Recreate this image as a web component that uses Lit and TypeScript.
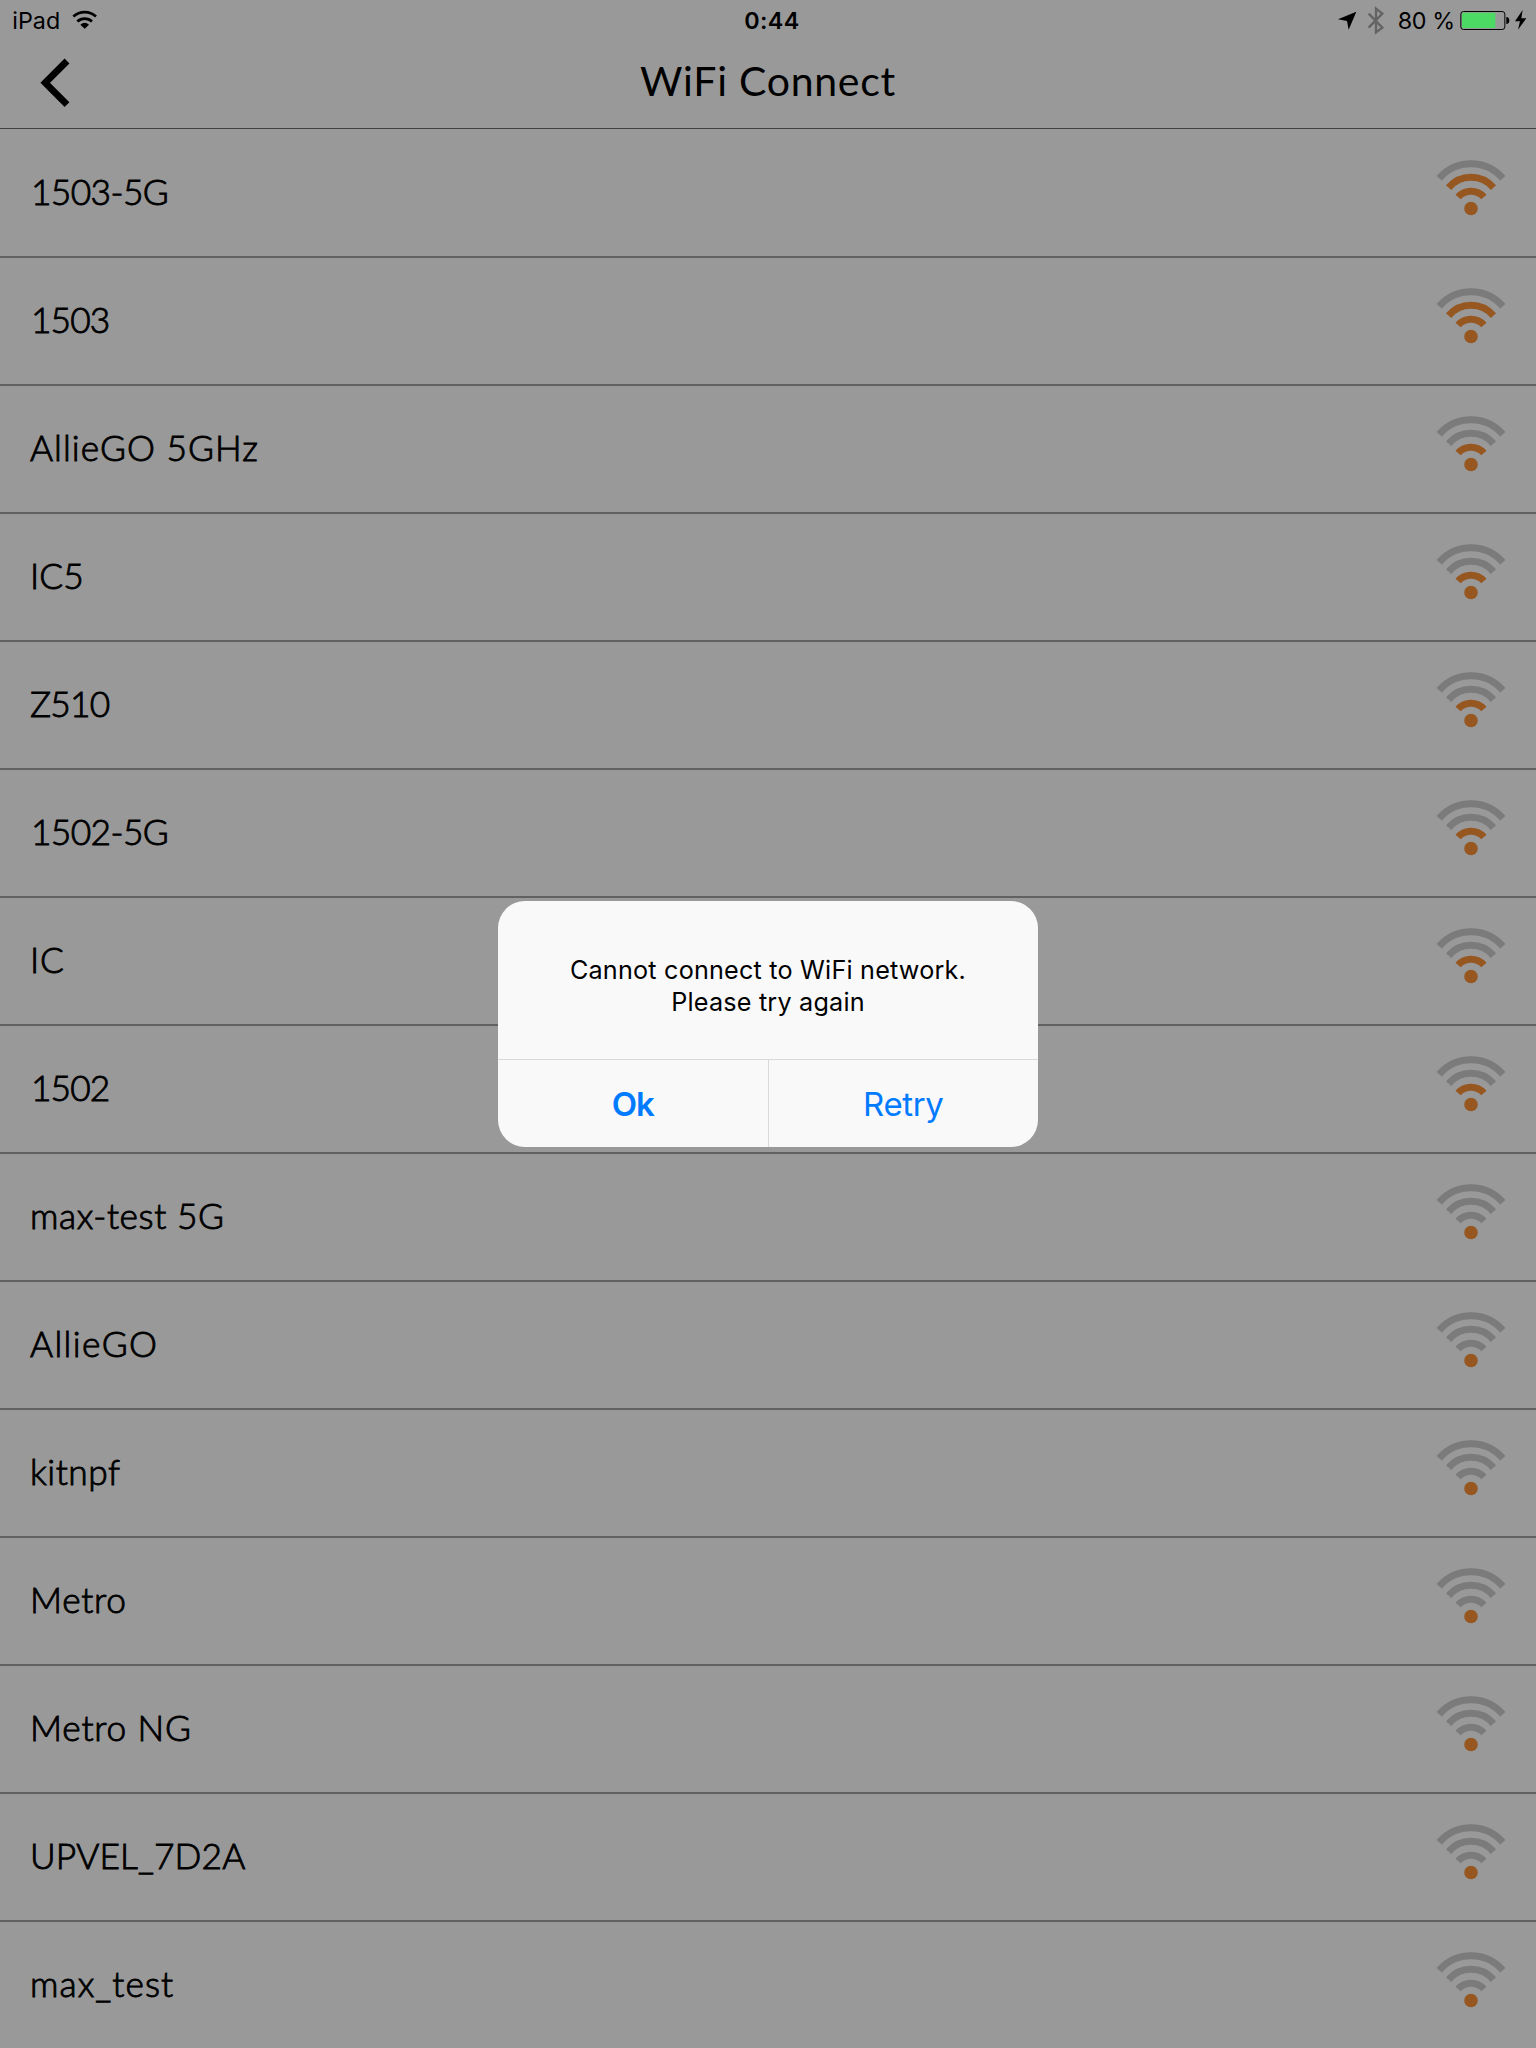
import { LitElement, html, svg, css } from "lit";
import { customElement, property } from "lit/decorators.js";
import { styleMap } from "lit/directives/style-map.js";

interface Network {
  name: string;
  level: number;
  /** Optical tracking of the label, px. */
  tracking: number;
  /** Distance of the label's origin from the left edge, px. */
  inset: number;
}

const NETWORKS: Network[] = [
  { name: "1503-5G", level: 3, tracking: -0.6, inset: 31 },
  { name: "1503", level: 3, tracking: -0.9, inset: 31 },
  { name: "AllieGO 5GHz", level: 2, tracking: 1.05, inset: 30 },
  { name: "IC5", level: 2, tracking: 0.1, inset: 30 },
  { name: "Z510", level: 2, tracking: -0.8, inset: 30 },
  { name: "1502-5G", level: 2, tracking: -0.6, inset: 31 },
  { name: "IC", level: 2, tracking: 0.8, inset: 30 },
  { name: "1502", level: 2, tracking: -0.9, inset: 31 },
  { name: "max-test 5G", level: 1, tracking: 0.6, inset: 30 },
  { name: "AllieGO", level: 1, tracking: 1.4, inset: 30 },
  { name: "kitnpf", level: 1, tracking: 0.5, inset: 30 },
  { name: "Metro", level: 1, tracking: 0.7, inset: 30 },
  { name: "Metro NG", level: 1, tracking: 0.8, inset: 30 },
  { name: "UPVEL_7D2A", level: 1, tracking: 0.12, inset: 30 },
  { name: "max_test", level: 1, tracking: 1.1, inset: 30 },
];

// Arcs from the innermost to the outermost.
const ARCS = [
  "M23.1 41A17.25 17.25 0 0 1 48.9 41",
  "M13.6 31.6A29.5 29.5 0 0 1 58.4 31.6",
  "M4.200 22.2A42 42 0 0 1 67.8 22.2",
];

@customElement("signal-icon")
export class SignalIcon extends LitElement {
  @property({ type: Number }) level = 1;

  static styles = css`
    :host { display: block; width: 72px; height: 70px; }
    svg { display: block; }
    .arc { fill: none; stroke: #7b7b7b; stroke-width: 7; }
    .arc.on { stroke: #965720; }
    .dot { fill: #965720; }
  `;

  render() {
    return html`<svg width="72" height="70" viewBox="0 0 72 70">
      ${ARCS.map((d, i) => svg`<path class=${i + 1 < this.level ? "arc on" : "arc"} d=${d} />`)}
      <circle class="dot" cx="36" cy="52.5" r="6.8" />
    </svg>`;
  }
}

@customElement("status-bar")
export class StatusBar extends LitElement {
  static styles = css`
    :host {
      display: flex;
      height: 41px;
      line-height: 41px;
      font-family: Inter, "Liberation Sans", sans-serif;
      font-size: 23.3px;
      white-space: nowrap;
    }
    svg { display: block; flex: none; }
    .left { display: flex; box-sizing: border-box; width: 744.3px; padding-left: 12.3px; }
    .device { width: 57.7px; }
    .time { font-weight: 600; letter-spacing: 0.35px; }
    .right { display: flex; margin-left: auto; }
    .percent { width: 58.97px; margin-left: 7.7px; letter-spacing: -0.4px; }
  `;

  render() {
    return html`
      <div class="left">
        <span class="device">iPad</span>
        <svg width="30" height="41" viewBox="210 0 90 123">
          <g fill="none" stroke="#000" stroke-width="8">
            <path d="M220 49.500A50 50 0 0 1 288 49.500" />
            <path d="M232 64.500A32 32 0 0 1 276 64.500" />
          </g>
          <path d="M254 86L241 74Q254 63 267 74Z" />
        </svg>
      </div>
      <span class="time">0:44</span>
      <div class="right">
        <svg width="55" height="41" viewBox="75 0 165 123">
          <path d="M139 35L116 89L111 63L84 58Z" />
          <path
            d="M176 41L217 83L198 97V26L217 41L176 83"
            fill="none" stroke="#636363" stroke-width="7"
          />
        </svg>
        <span class="percent">80 %</span>
        <svg width="79.33" height="41" viewBox="440 0 238 123">
          <rect x="451.500" y="34.500" width="132" height="54" rx="8" fill="none" stroke="#000" stroke-width="3" />
          <rect x="455" y="38" width="100" height="46" rx="3" fill="#4cd964" />
          <path d="M588 51Q597 52 597 61.500Q597 71 588 72Z" />
          <path d="M637 30L614 64H629L623 89L648 55H633Z" />
        </svg>
      </div>
    `;
  }
}

@customElement("alert-dialog")
export class AlertDialog extends LitElement {
  static styles = css`
    :host {
      display: flex;
      flex-direction: column;
      box-sizing: border-box;
      width: 540px;
      height: 246px;
      border-radius: 27px;
      background: #f9f9f9;
      overflow: hidden;
      font-family: Inter, "Liberation Sans", sans-serif;
    }
    .message {
      flex: 1;
      margin: 0;
      padding-top: 53px;
      font-size: 25.2px;
      line-height: 32px;
      letter-spacing: 0.2px;
      text-align: center;
    }
    .actions { display: flex; height: 87px; border-top: 1px solid #d9d9db; }
    button {
      flex: 1;
      margin: 0;
      padding: 1px 0 0;
      border: 0;
      background: none;
      color: #007aff;
      font: 400 33px/86px Inter, "Liberation Sans", sans-serif;
      letter-spacing: -0.4px;
    }
    .primary { font-weight: 600; letter-spacing: -1.2px; border-right: 1px solid #d9d9db; }
  `;

  render() {
    return html`
      <p class="message">Cannot connect to WiFi network.<br />Please try again</p>
      <div class="actions">
        <button class="primary">Ok</button>
        <button>Retry</button>
      </div>
    `;
  }
}

@customElement("app-root")
export class AppRoot extends LitElement {
  static styles = css`
    :host {
      display: block;
      position: relative;
      width: 1536px;
      height: 2048px;
      overflow: hidden;
      background: #999;
      color: #000;
      font-family: Lato, "Open Sans", sans-serif;
    }
    .nav {
      display: grid;
      grid-template-columns: 120px 1fr 120px;
      box-sizing: border-box;
      height: 88px;
      border-bottom: 1px solid #404040;
    }
    .back { display: block; padding: 14px 0 0 36px; }
    .title {
      margin: 0;
      font-size: 41px;
      font-weight: 400;
      line-height: 80px;
      letter-spacing: 0.72px;
      text-align: center;
    }
    .list { display: flex; flex-direction: column; margin: 0; padding: 1px 0 0; list-style: none; }
    .row {
      display: flex;
      align-items: center;
      justify-content: space-between;
      box-sizing: border-box;
      height: 128px;
      padding-right: 29px;
      padding-bottom: 4px;
      border-bottom: 2px solid #616161;
      font-size: 35.3px;
      font-weight: 300;
      line-height: 44px;
      white-space: pre;
    }
    .label { padding-top: 2px; -webkit-text-stroke: 0.9px #000; }
    .alert { position: absolute; left: 498px; top: 901px; }
  `;

  render() {
    return html`
      <status-bar></status-bar>
      <header class="nav">
        <svg class="back" width="40" height="56" viewBox="0 0 40 56">
          <path d="M31 6L9.200 27.8L31 49.600" fill="none" stroke="#000" stroke-width="6.8" />
        </svg>
        <h1 class="title">WiFi Connect</h1>
      </header>
      <ul class="list">
        ${NETWORKS.map(
          (n) => html`<li class="row"><span
              class="label"
              style=${styleMap({ letterSpacing: `${n.tracking}px`, marginLeft: `${n.inset}px` })}
            >${n.name}</span><signal-icon .level=${n.level}></signal-icon></li>`,
        )}
      </ul>
      <alert-dialog class="alert" role="alertdialog"></alert-dialog>
    `;
  }
}
